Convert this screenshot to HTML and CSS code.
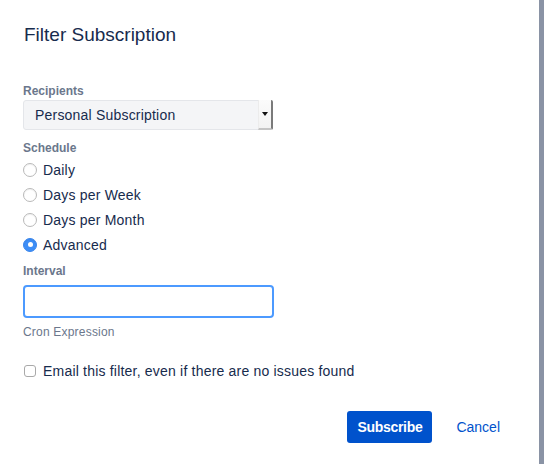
FILE: index.html
```html
<!DOCTYPE html>
<html lang="en">
<head>
<meta charset="utf-8">
<title>Filter Subscription</title>
<link rel="stylesheet" href="styles.css">
</head>
<body>
<div class="page">
  <main class="dialog">
    <h2 class="title">Filter Subscription</h2>
    <form class="form">
      <div class="field">
        <div class="label">Recipients</div>
        <div class="select">
          <span class="select-value">Personal Subscription</span>
          <span class="select-arrow"><span class="tri"></span></span>
        </div>
      </div>
      <div class="field">
        <div class="label label-schedule">Schedule</div>
        <div class="radios">
          <label class="radio"><span class="radio-dot"></span>Daily</label>
          <label class="radio"><span class="radio-dot"></span>Days per Week</label>
          <label class="radio"><span class="radio-dot"></span>Days per Month</label>
          <label class="radio"><span class="radio-dot checked"></span>Advanced</label>
        </div>
      </div>
      <div class="field">
        <div class="label label-interval">Interval</div>
        <div class="input"></div>
        <div class="hint">Cron Expression</div>
      </div>
      <label class="check"><span class="check-box"></span>Email this filter, even if there are no issues found</label>
      <div class="buttons">
        <span class="btn btn-primary">Subscribe</span>
        <span class="btn btn-link">Cancel</span>
      </div>
    </form>
  </main>
  <div class="edge"></div>
</div>
</body>
</html>
```

FILE: styles.css
```css
* { box-sizing: border-box; }
html, body { margin: 0; padding: 0; background: #fff; }
body {
  font-family: "Liberation Sans", Arial, sans-serif;
  color: #172b4d;
  font-size: 14px;
}
.page {
  display: flex;
  width: 544px;
  height: 464px;
}
.dialog {
  flex: 1;
  padding: 23px 0 0 23px;
}
.edge {
  width: 5px;
  background: #8a93a5;
}
.title {
  margin: 0 0 0 1px;
  font-size: 19px;
  line-height: 24px;
  font-weight: 400;
  color: #172b4d;
}
.form {
  display: flex;
  flex-direction: column;
  margin-top: 36px;
}
.field {
  display: flex;
  flex-direction: column;
}
.label {
  font-size: 12px;
  line-height: 16px;
  font-weight: 700;
  color: #6b778c;
}
.label-schedule { margin-top: 10px; }
.label-interval { margin-top: 6px; }
.select {
  margin-top: 1px;
  width: 250px;
  height: 30px;
  display: flex;
  align-items: stretch;
  background: #f4f5f7;
  border: 1px solid #e4e6ea;
  border-radius: 3px;
  padding-left: 11px;
}
.select-value {
  align-self: center;
  font-size: 14px;
  line-height: 16px;
  letter-spacing: 0.2px;
  color: #172b4d;
}
.select-arrow {
  margin-left: auto;
  width: 15px;
  margin-top: -1px;
  margin-bottom: -1px;
  margin-right: -1px;
  display: flex;
  align-items: center;
  justify-content: center;
  border-right: 2px solid #7a7a7a;
  border-bottom: 2px solid #c4c4c4;
  border-left: 1px solid #ececec;
  border-radius: 0 2px 2px 0;
  background: linear-gradient(#fbfbfb, #f2f2f2);
}
.tri {
  width: 0;
  height: 0;
  border-left: 3px solid transparent;
  border-right: 3px solid transparent;
  border-top: 4px solid #111;
  margin-left: -1px;
}
.radios {
  display: flex;
  flex-direction: column;
  margin-top: 1px;
}
.radio {
  height: 25px;
  display: flex;
  align-items: center;
  gap: 6px;
  font-size: 14px;
  line-height: 16px;
  letter-spacing: 0.2px;
  color: #172b4d;
}
.radio-dot {
  width: 14px;
  height: 14px;
  border-radius: 50%;
  border: 1px solid #b9b9b9;
  background: #fff;
  box-shadow: inset 0 1px 1px rgba(0,0,0,0.06);
  display: flex;
  align-items: center;
  justify-content: center;
}
.radio-dot.checked {
  background: #3d8ef7;
  border-color: #3a86ec;
}
.radio-dot.checked::after {
  content: "";
  width: 5px;
  height: 5px;
  border-radius: 50%;
  background: #fff;
}
.input {
  margin-top: 6px;
  width: 251px;
  height: 33px;
  border: 2px solid #4c9aff;
  border-radius: 4px;
  background: #fff;
}
.hint {
  margin-top: 6px;
  font-size: 12px;
  line-height: 16px;
  letter-spacing: 0.2px;
  color: #6b778c;
}
.check {
  margin-top: 21px;
  height: 20px;
  display: flex;
  align-items: center;
  gap: 7px;
  padding-left: 1px;
  font-size: 14px;
  line-height: 16px;
  letter-spacing: 0.2px;
  color: #172b4d;
}
.check-box {
  width: 12px;
  height: 12px;
  border: 1px solid #a9a9a9;
  border-radius: 3px;
  background: #fff;
}
.buttons {
  margin-top: 30px;
  display: flex;
  justify-content: flex-end;
  gap: 14px;
  padding-right: 29px;
}
.btn {
  height: 32px;
  display: flex;
  align-items: center;
  padding: 0 10px;
  border-radius: 3px;
  font-size: 14px;
  line-height: 16px;
}
.btn-primary {
  background: #0052cc;
  color: #fff;
  font-weight: 700;
  letter-spacing: -0.3px;
}
.btn-link {
  color: #0052cc;
}
```
